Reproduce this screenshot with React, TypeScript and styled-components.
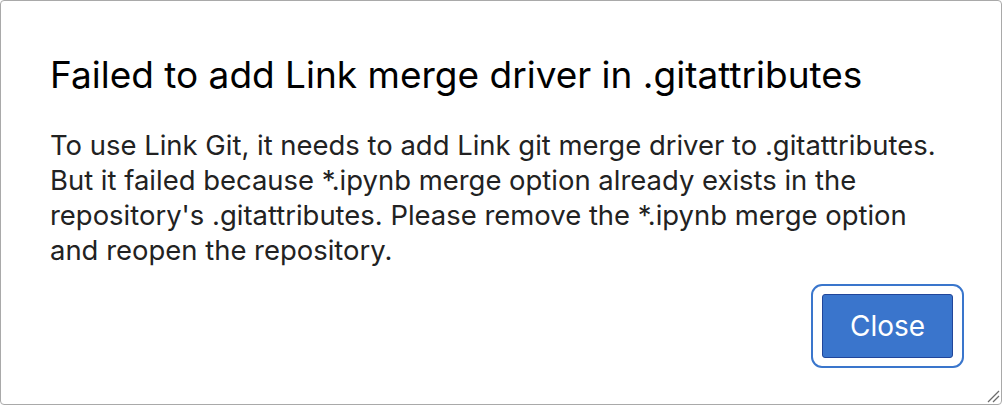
import React from "react";
import styled, { createGlobalStyle } from "styled-components";

const Global = createGlobalStyle`
  html, body { margin: 0; padding: 0; background: #ffffff; }
  body { font-family: Inter, "Noto Sans", sans-serif; -webkit-font-smoothing: antialiased; }
  #root { width: 1002px; height: 406px; }
`;

const Dialog = styled.div`
  position: relative;
  box-sizing: border-box;
  width: 1002px;
  height: 405px;
  background: #ffffff;
  border: 1px solid #a9a9a9;
  border-radius: 4px;
  padding: 49px 49px 0 49px;
  display: flex;
  flex-direction: column;
`;

const Title = styled.h1`
  margin: 0;
  font-family: Inter, "Noto Sans", sans-serif;
  font-size: 37px;
  font-weight: 400;
  line-height: 50px;
  color: #000000;
  white-space: nowrap;
`;

const Body = styled.p`
  margin: 28px 0 0 0;
  font-family: Inter, "Noto Sans", sans-serif;
  font-size: 27.45px;
  font-weight: 400;
  line-height: 35px;
  color: #222222;
  white-space: nowrap;
`;

const Footer = styled.div`
  display: flex;
  justify-content: flex-end;
  margin-top: auto;
  padding: 0 0 36px 0;
  margin-right: -12px;
`;

const FocusRing = styled.div`
  display: flex;
  border: 2px solid #3a76cc;
  border-radius: 11px;
  padding: 8px 9px;
`;

const Button = styled.button`
  width: 131px;
  height: 64px;
  box-sizing: border-box;
  background: #3a75cc;
  border: 1px solid #21469a;
  border-radius: 3px;
  color: #ffffff;
  font-family: Inter, "Noto Sans", sans-serif;
  font-size: 28px;
  font-weight: 400;
  padding: 0;
  cursor: pointer;
`;

const Grip = styled.svg`
  position: absolute;
  right: 1px;
  bottom: 1px;
  width: 14px;
  height: 14px;
`;

export default function App() {
  return (
    <>
      <Global />
      <Dialog>
        <Title>Failed to add Link merge driver in .gitattributes</Title>
        <Body>
          To use Link Git, it needs to add Link git merge driver to .gitattributes.
          <br />
          But it failed because *.ipynb merge option already exists in the
          <br />
          repository's .gitattributes. Please remove the *.ipynb merge option
          <br />
          and reopen the repository.
        </Body>
        <Footer>
          <FocusRing>
            <Button>Close</Button>
          </FocusRing>
        </Footer>
        <Grip viewBox="0 0 14 14">
          <line x1="2" y1="13" x2="13" y2="2" stroke="#6b6b6b" strokeWidth="1.2" />
          <line x1="7" y1="13" x2="13" y2="7" stroke="#6b6b6b" strokeWidth="1.2" />
        </Grip>
      </Dialog>
    </>
  );
}
